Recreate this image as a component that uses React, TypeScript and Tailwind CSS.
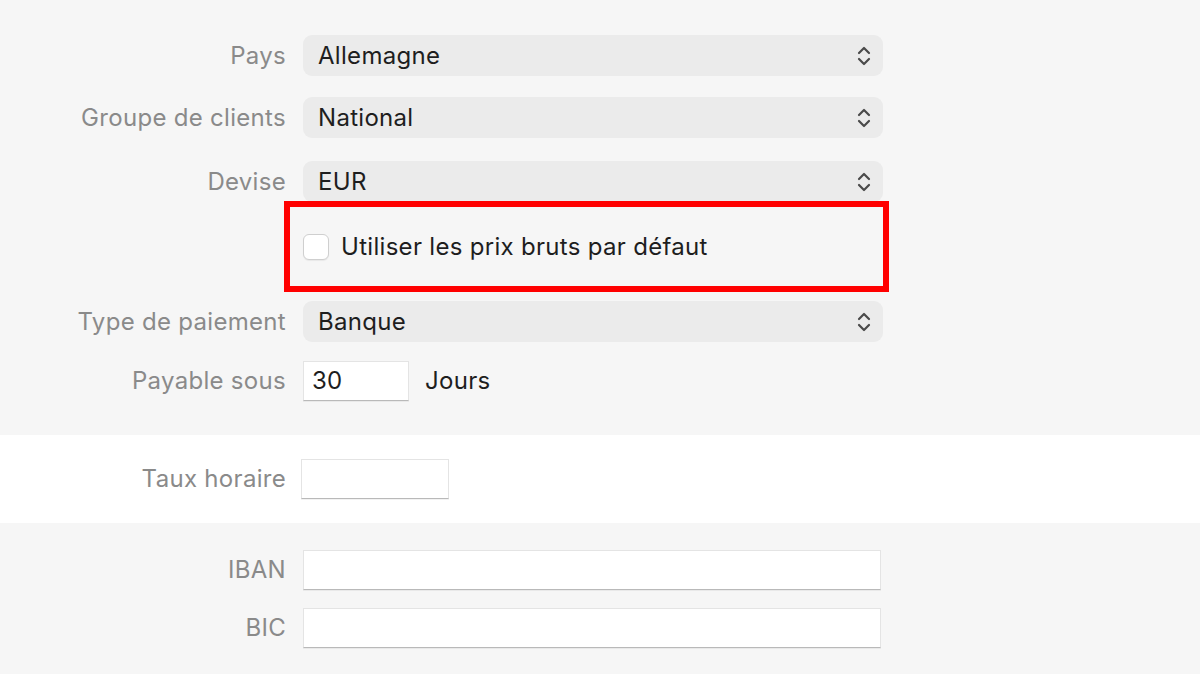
import React from 'react';

const Chevrons = () => (
  <svg width="16" height="22" viewBox="0 0 16 22" fill="none" stroke="#4a4a4a" strokeWidth="2.2" strokeLinecap="round" strokeLinejoin="round">
    <path d="M3 8 L8 3 L13 8" />
    <path d="M3 14 L8 19 L13 14" />
  </svg>
);

const Label = ({ children }: { children: React.ReactNode }) => (
  <div className="w-[286px] shrink-0 text-right text-[#8a8a8a]">{children}</div>
);

const Select = ({ value }: { value: string }) => (
  <div className="ml-[17px] flex h-[41px] w-[580px] items-center justify-between rounded-[9px] bg-[#ebebeb] pl-[15px] pr-[11px] text-[#1e1e1e]">
    <span>{value}</span>
    <Chevrons />
  </div>
);

const TextInput = ({ width, value, ml = 'ml-[17px]' }: { width: string; value?: string; ml?: string }) => (
  <div className={`${ml} ${width} flex h-[40px] items-center border border-[#e4e4e4] border-b-[#b9b9b9] bg-white pl-[8px] text-[#1e1e1e] shadow-[0_1px_0_rgba(0,0,0,0.05)]`}>
    {value}
  </div>
);

export default function App() {
  return (
    <div className="h-[674px] w-[1200px] overflow-hidden bg-[#f6f6f6] text-[24px] tracking-[0.3px]" style={{ fontFamily: 'Inter, "Noto Sans", sans-serif' }}>
      {/* top section */}
      <div className="flex h-[435px] flex-col pt-[35px]">
        <div className="flex items-center">
          <Label>Pays</Label>
          <Select value="Allemagne" />
        </div>
        <div className="mt-[21px] flex items-center">
          <Label>Groupe de clients</Label>
          <Select value="National" />
        </div>
        <div className="mt-[23px] flex items-center">
          <Label>Devise</Label>
          <Select value="EUR" />
        </div>
        <div className="-mt-[1px] ml-[284px] flex h-[91px] w-[605px] items-center border-[6px] border-[#ff0000] pl-[13px]">
          <div className="h-[26px] w-[26px] rounded-[6px] border border-[#cfcfcf] bg-white shadow-[0_1px_1px_rgba(0,0,0,0.06)]" />
          <span className="ml-[12px] text-[#1e1e1e]">Utiliser les prix bruts par défaut</span>
        </div>
        <div className="mt-[9px] flex items-center">
          <Label>Type de paiement</Label>
          <Select value="Banque" />
        </div>
        <div className="mt-[19px] flex items-center">
          <Label>Payable sous</Label>
          <TextInput width="w-[106px]" value="30" />
          <span className="ml-[16px] text-[#1e1e1e]">Jours</span>
        </div>
      </div>

      {/* white band */}
      <div className="flex h-[88px] items-center bg-white">
        <Label>Taux horaire</Label>
        <TextInput width="w-[148px]" ml="ml-[15px]" />
      </div>

      {/* bank */}
      <div className="flex flex-col pt-[27px]">
        <div className="flex items-center">
          <Label>IBAN</Label>
          <TextInput width="w-[578px]" />
        </div>
        <div className="mt-[18px] flex items-center">
          <Label>BIC</Label>
          <TextInput width="w-[578px]" />
        </div>
      </div>
    </div>
  );
}
